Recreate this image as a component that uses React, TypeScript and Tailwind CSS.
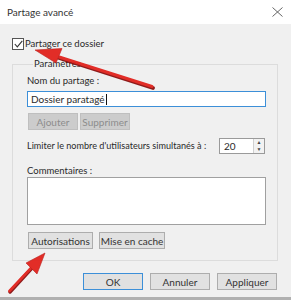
import React from 'react';

const font = { fontFamily: 'Lato, "Noto Sans", sans-serif' };

const Button = ({ label, w, disabled, primary }: { label: string; w: string; disabled?: boolean; primary?: boolean }) => (
  <button
    type="button"
    disabled={disabled}
    className={
      disabled
        ? `${w} h-[17px] border border-[#bfbfbf] bg-[#cccccc] text-[#8c8c8c] leading-none`
        : primary
          ? `${w} h-[17px] border-[1.5px] border-[#3c8fd8] bg-[#e1e1e1] text-[#333] leading-none`
          : `${w} h-[17px] border border-[#adadad] bg-[#e1e1e1] text-[#333] leading-none`
    }
  >
    {label}
  </button>
);

const Arrows = () => (
  <svg className="pointer-events-none absolute left-0 top-0" width="291" height="300" viewBox="0 0 291 300">
    {/* arrow towards the checkbox */}
    <g opacity="0.95">
      <line x1="153" y1="88" x2="56" y2="57" stroke="#8a1010" strokeWidth="3.8" strokeLinecap="round" />
      <line x1="152" y1="86.5" x2="56" y2="56" stroke="#e2231d" strokeWidth="3" strokeLinecap="round" />
      <polygon points="35,50 62,48.5 56,63" fill="#e2231d" stroke="#b81512" strokeWidth="0.6" />
    </g>
    {/* arrow towards Autorisations */}
    <g opacity="0.95">
      <line x1="10" y1="292" x2="32" y2="268" stroke="#8a1010" strokeWidth="3.4" strokeLinecap="round" />
      <line x1="9.5" y1="291" x2="32" y2="267" stroke="#e2231d" strokeWidth="2.6" strokeLinecap="round" />
      <polygon points="45,253 37,274 26,263" fill="#e2231d" stroke="#b81512" strokeWidth="0.6" />
    </g>
  </svg>
);

export default function App() {
  return (
    <div className="relative h-[300px] w-[291px] overflow-hidden bg-[#f0f0f0] text-[10px] text-[#2a2a2a]" style={font}>
      {/* Title bar */}
      <div className="flex h-[24px] items-center justify-between bg-white pl-[7px] pr-[8px]">
        <span className="text-[10px] text-[#333]">Partage avancé</span>
        <svg width="11" height="10" viewBox="0 0 11 10">
          <path d="M0.5 0.5 L10.5 9.5 M10.5 0.5 L0.5 9.5" stroke="#555" strokeWidth="0.9" fill="none" />
        </svg>
      </div>

      <div className="px-[12px] pt-[14px]">
        {/* Share checkbox */}
        <label className="flex h-[12px] items-center gap-[1px]">
          <span className="flex h-[12px] w-[12px] items-center justify-center border border-[#555] bg-white">
            <svg width="9" height="8" viewBox="0 0 9 8">
              <path d="M0.8 4 L3.3 6.8 L8.3 0.8" stroke="#333" strokeWidth="1.1" fill="none" />
            </svg>
          </span>
          <span className="text-[9.5px]">Partager ce dossier</span>
        </label>

        {/* Settings group */}
        <fieldset className="mt-[7px] w-[266px] min-w-0 border border-[#dcdcdc] pb-[11px] pl-[14px] pr-[11px]">
          <legend className="ml-[6px] px-[1px] text-[9.5px] leading-[14px]">Paramètres</legend>

          <div className="mt-[2px] text-[9.5px] leading-[16px]">Nom du partage :</div>
          <div className="mt-[2px] flex h-[16px] items-center border border-[#3c8fd8] bg-white pl-[3px]">
            Dossier paratagé<span className="ml-[1px] h-[11px] w-px bg-[#111]" />
          </div>

          <div className="ml-[1px] mt-[6px] flex gap-[2px]">
            <Button label="Ajouter" w="w-[50px]" disabled />
            <Button label="Supprimer" w="w-[50px]" disabled />
          </div>

          <div className="mt-[8px] flex h-[16px] items-center justify-between whitespace-nowrap">
            <span className="text-[9.1px]">Limiter le nombre d&apos;utilisateurs simultanés à :</span>
            <div className="mr-[1px] flex h-[16px] w-[46px] border border-[#9a9a9a] bg-white">
              <span className="flex flex-1 items-center pl-[4px]">20</span>
              <div className="flex w-[11px] flex-col border-l border-[#d0d0d0] bg-[#f2f2f2]">
                <span className="flex flex-1 items-center justify-center text-[5px] leading-none text-[#444]">▲</span>
                <span className="flex flex-1 items-center justify-center text-[5px] leading-none text-[#444]">▼</span>
              </div>
            </div>
          </div>

          <div className="mt-[10px] text-[9.5px] leading-[13px]">Commentaires :</div>
          <div className="h-[48px] border border-[#a0a0a0] bg-white" />

          <div className="ml-[1px] mt-[7px] flex gap-[6px]">
            <Button label="Autorisations" w="w-[65px]" />
            <Button label="Mise en cache" w="w-[66px]" />
          </div>
        </fieldset>

        {/* Dialog buttons */}
        <div className="ml-[71px] mt-[12px] flex gap-[7px]">
          <Button label="OK" w="w-[60px]" primary />
          <Button label="Annuler" w="w-[60px]" />
          <Button label="Appliquer" w="w-[60px]" />
        </div>
      </div>

      <div className="absolute bottom-0 left-0 h-[3px] w-full bg-[#b0b0b0]" />
      <Arrows />
    </div>
  );
}
